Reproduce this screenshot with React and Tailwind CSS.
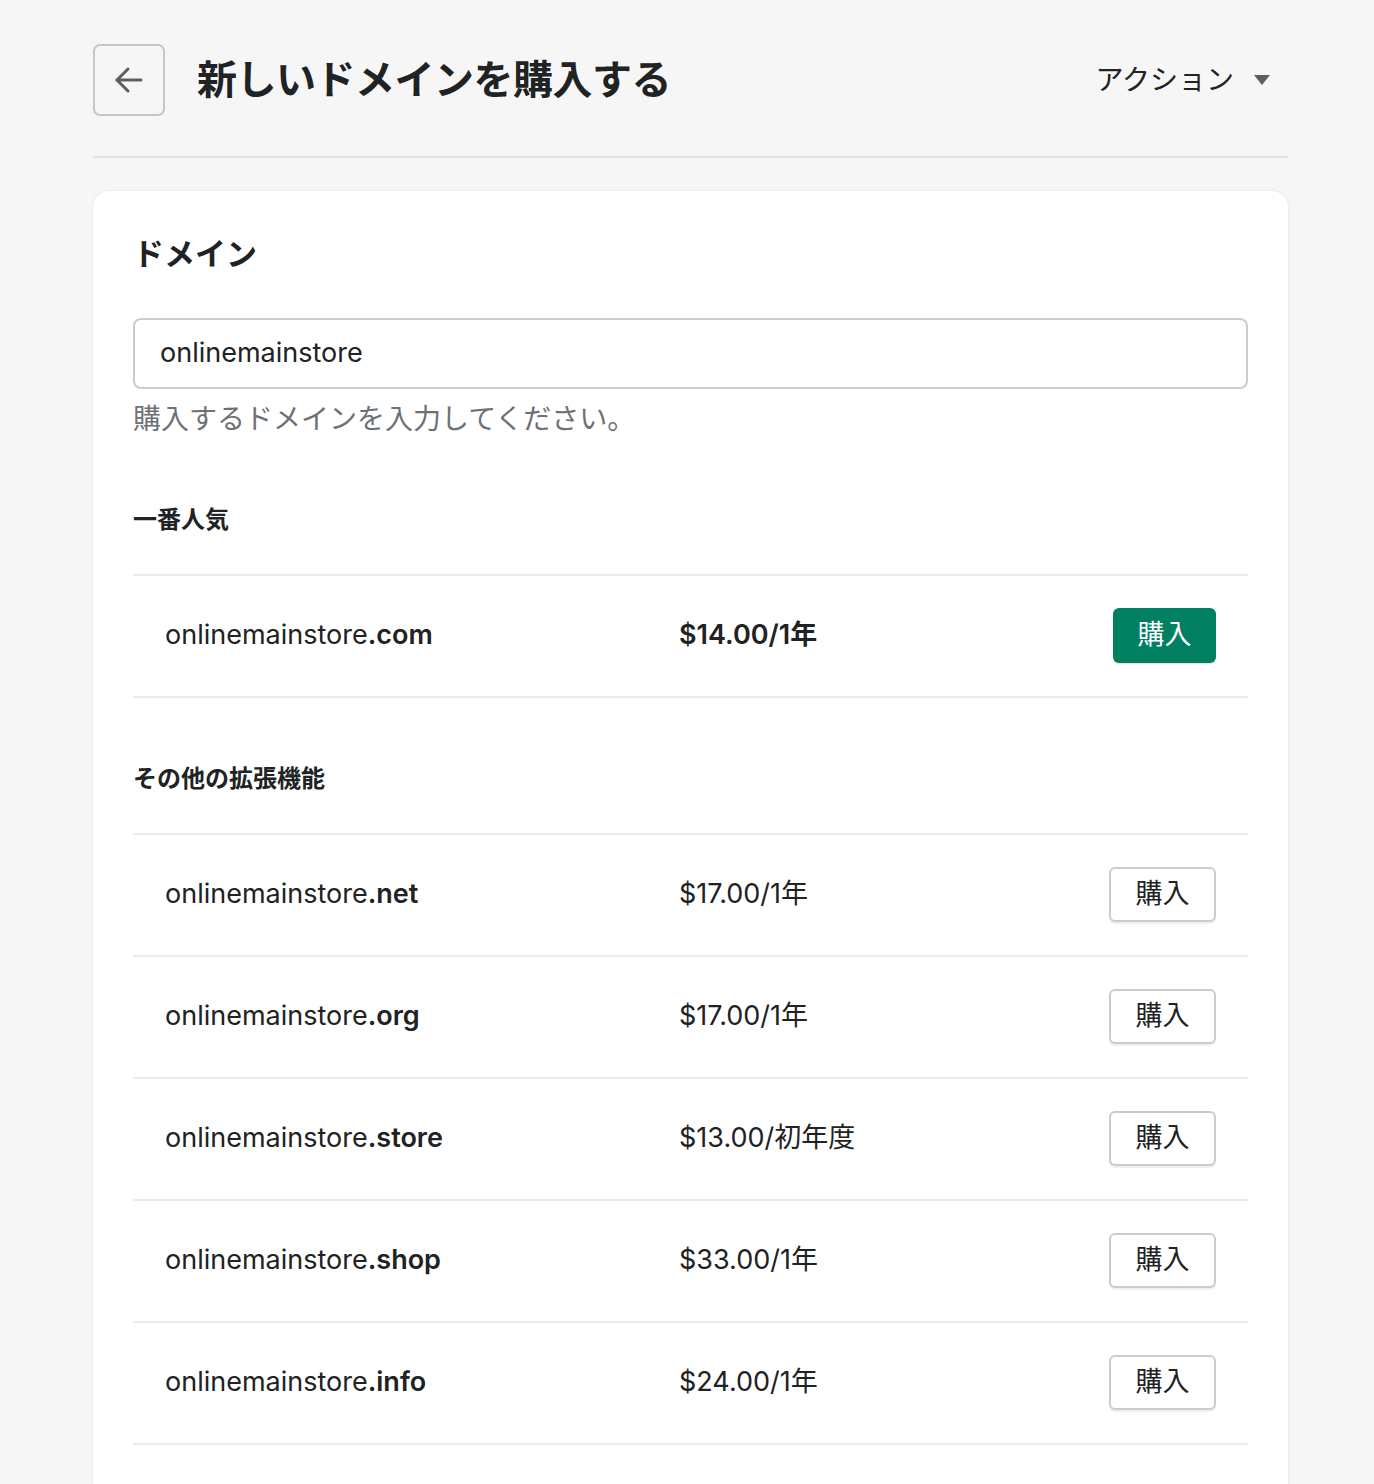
import React from "react";

const font = {
  fontFamily:
    'Inter, "Noto Sans CJK JP", "Noto Sans", sans-serif',
};

const domains = [
  { tld: "net", price: "$17.00/1年" },
  { tld: "org", price: "$17.00/1年" },
  { tld: "store", price: "$13.00/初年度" },
  { tld: "shop", price: "$33.00/1年" },
  { tld: "info", price: "$24.00/1年" },
];

const DomainRow = ({ tld, price, primary }) => (
  <div className="flex items-center h-[122px] border-b-2 border-[#ebebeb] px-8">

    {/* NAME */}
    <div className="w-[514px] text-[27px] text-[#202223]">
      onlinemainstore
      <span className="font-semibold">.{tld}</span>
    </div>

    {/* PRICE */}
    <div
      className={
        primary
          ? "flex-1 text-[27px] font-semibold text-[#202223]"
          : "flex-1 text-[27px] text-[#202223]"
      }
    >
      {price}
    </div>

    {/* BUTTON */}
    {primary ? (
      <button className="w-[103px] h-[55px] rounded-[6px] bg-[#008060] text-white text-[27px] shadow-[0_1px_0_rgba(0,0,0,0.1)]">
        購入
      </button>
    ) : (
      <button className="w-[107px] h-[55px] rounded-[6px] bg-white border-2 border-[#c9cccf] text-[#202223] text-[27px] shadow-[0_2px_0_rgba(0,0,0,0.06)]">
        購入
      </button>
    )}

  </div>
);

const App = () => {
  return (
    <div
      className="min-h-[1484px] bg-[#f6f6f7] pl-[93px] pr-[86px] pt-[44px]"
      style={font}
    >

      {/* HEADER */}
      <div className="flex items-center h-[72px]">

        <button className="w-[72px] h-[72px] rounded-[7px] border-2 border-[#c4c6c8] flex items-center justify-center">
          <svg
            width="30"
            height="30"
            viewBox="0 0 30 30"
            fill="none"
            stroke="#5c5f62"
            strokeWidth="3"
            strokeLinecap="round"
            strokeLinejoin="round"
          >
            <path d="M27 15H3" />
            <path d="M14 4L3 15l11 11" />
          </svg>
        </button>

        <h1 className="ml-[32px] text-[40px] font-bold text-[#202223] tracking-[-0.5px]">
          新しいドメインを購入する
        </h1>

        <div className="ml-auto mr-[18px] flex items-center gap-[20px] text-[28px] text-[#202223]">
          アクション
          <svg width="16" height="10" viewBox="0 0 16 10">
            <path d="M0 0h16L8 10z" fill="#5c5f62" />
          </svg>
        </div>

      </div>

      {/* DIVIDER */}
      <div className="mt-[40px] border-t-2 border-[#e1e3e5]" />

      {/* CARD */}
      <div className="mt-[33px] bg-white rounded-t-[16px] shadow-[0_0_3px_rgba(0,0,0,0.1)] px-[40px] pt-[40px] pb-[60px]">

        <h2 className="text-[31px] font-bold text-[#202223]">
          ドメイン
        </h2>

        {/* INPUT */}
        <div className="mt-[40px] h-[71px] border-2 border-[#c9cccf] rounded-[8px] flex items-center px-[25px] text-[27px] text-[#202223]">
          onlinemainstore
        </div>

        <p className="mt-[9px] text-[28px] text-[#6d7175]">
          購入するドメインを入力してください。
        </p>

        {/* POPULAR */}
        <h3 className="mt-[62px] text-[24px] font-bold text-[#202223]">
          一番人気
        </h3>

        <div className="mt-[36px] border-t-2 border-[#ebebeb]">
          <DomainRow
            tld="com"
            price="$14.00/1年"
            primary
          />
        </div>

        {/* OTHERS */}
        <h3 className="mt-[63px] text-[24px] font-bold text-[#202223]">
          その他の拡張機能
        </h3>

        <div className="mt-[36px] border-t-2 border-[#ebebeb]">
          {domains.map((d) => (
            <DomainRow
              key={d.tld}
              tld={d.tld}
              price={d.price}
            />
          ))}
        </div>

      </div>

    </div>
  );
};

export default App;
